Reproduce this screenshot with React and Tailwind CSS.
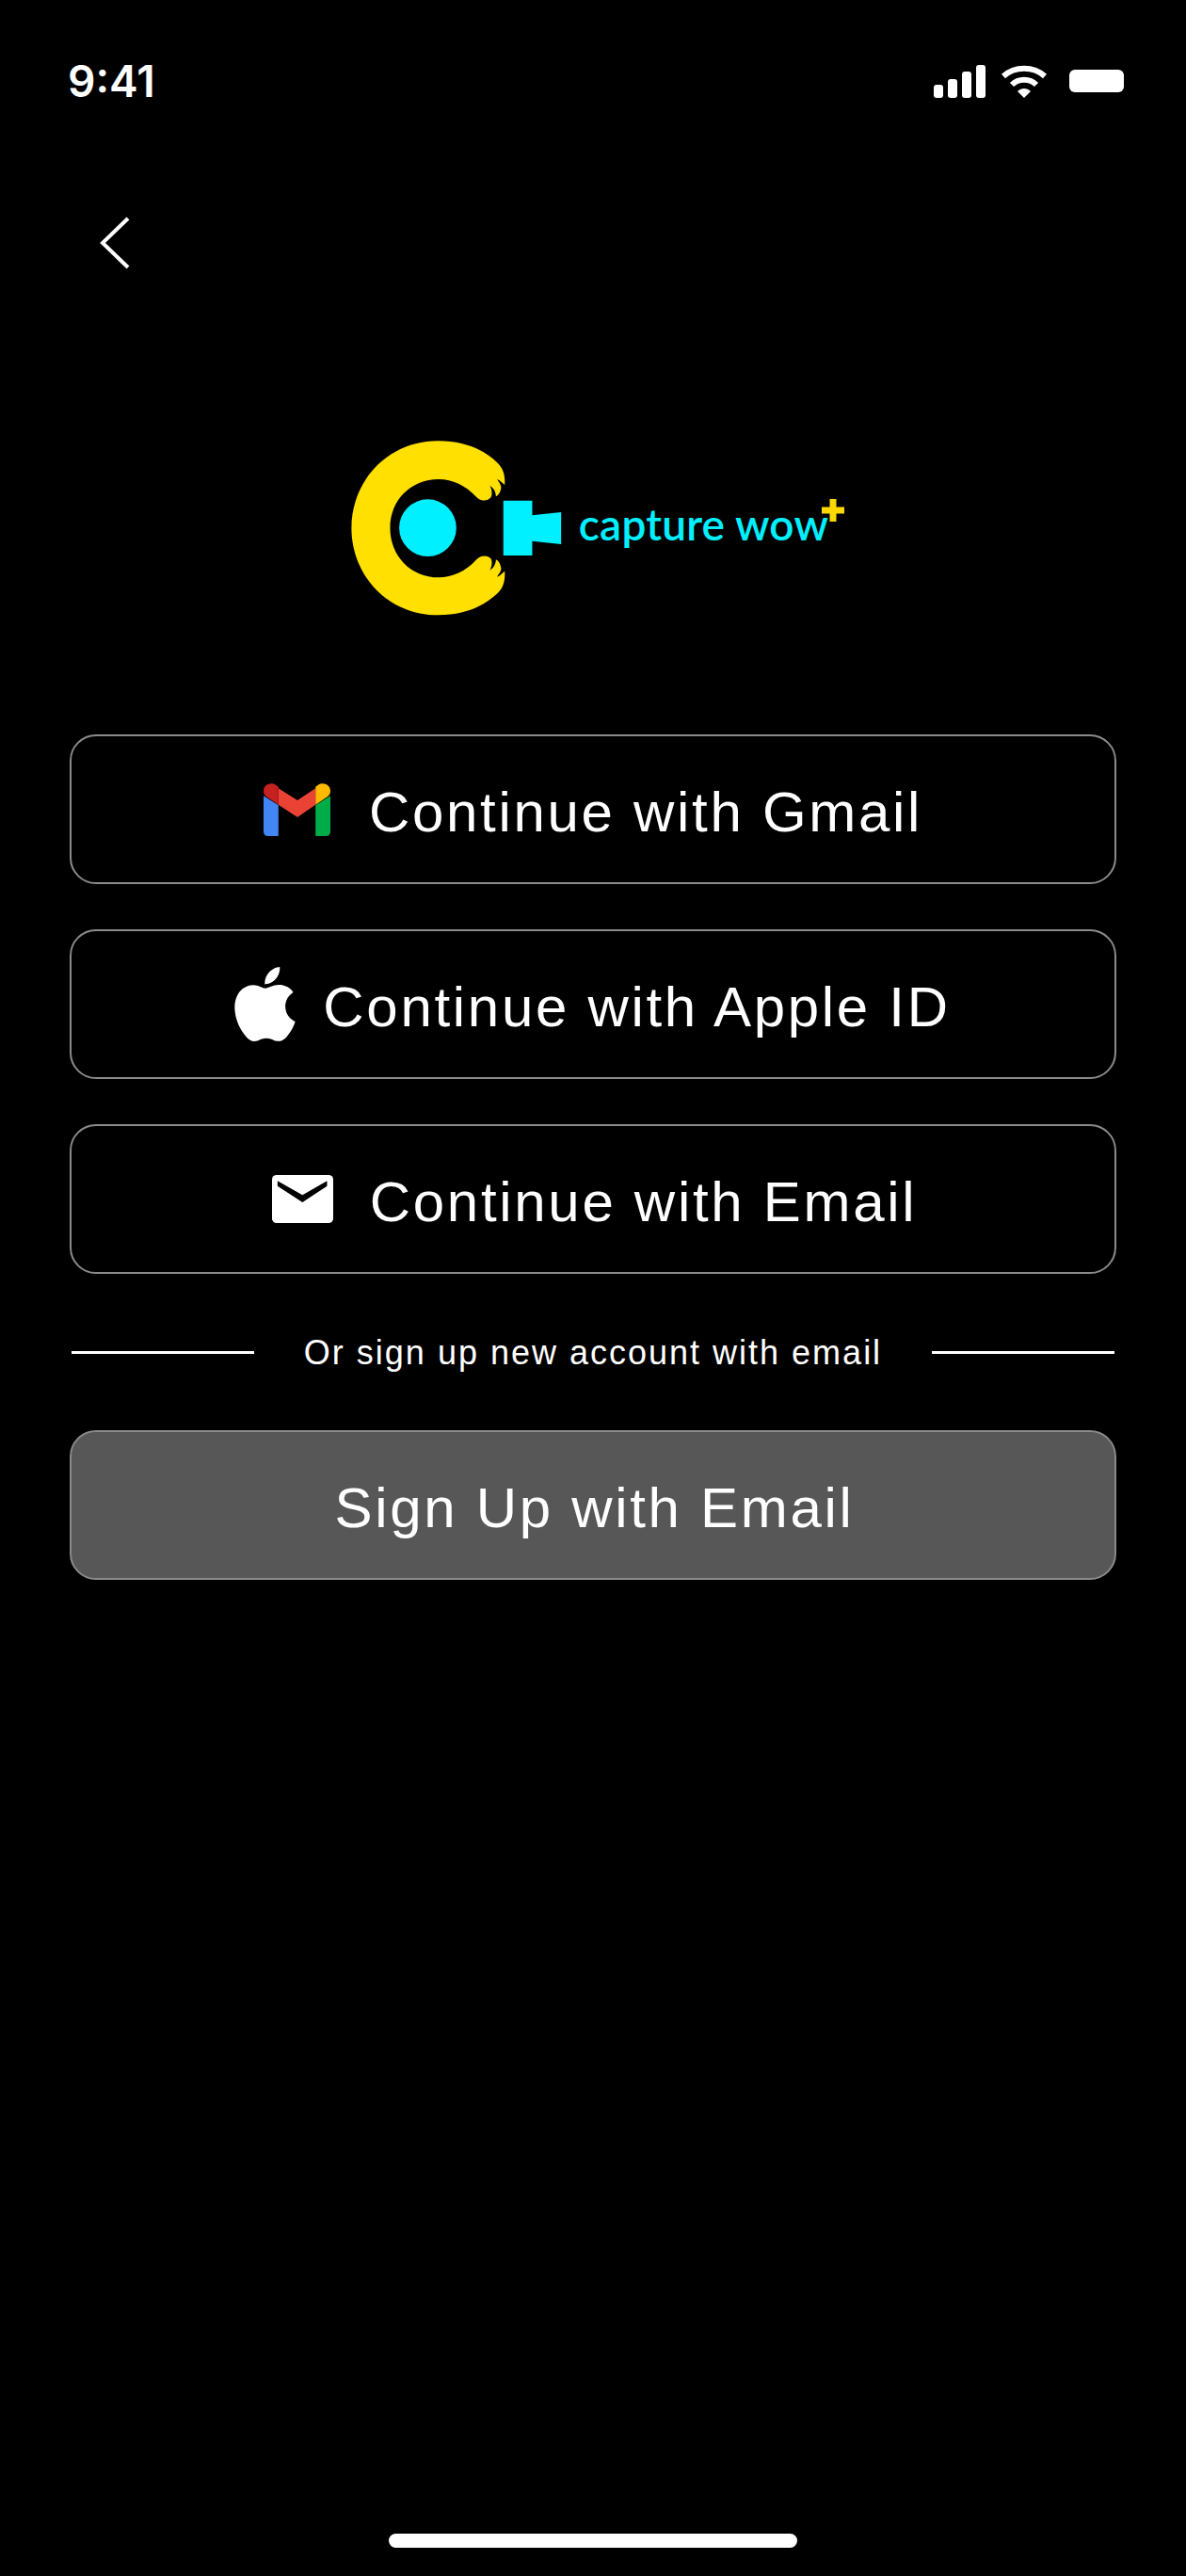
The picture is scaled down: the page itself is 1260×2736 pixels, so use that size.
import React from "react";
import { SiApple } from "react-icons/si";

const GmailIcon = () => (
  <svg width="71" height="56" viewBox="0 0 207 168" preserveAspectRatio="none" className="shrink-0">
    <path d="M0 40 L46 70 V168 H14 Q0 168 0 154 Z" fill="#4285F4" />
    <path d="M161 70 L207 40 V154 Q207 168 193 168 H161 Z" fill="#00AC47" />
    <path d="M46 16 L105 54 L161 16 V68 L105 108 L46 68 Z" fill="#EA4335" />
    <path d="M0 24 C0 4 22 -6 38 5 L46 11 V68 L8 42 C3 38 0 32 0 24 Z" fill="#C5221F" />
    <path d="M207 24 C207 4 185 -6 169 5 L161 11 V68 L199 42 C204 38 207 32 207 24 Z" fill="#FFBA00" />
  </svg>
);

const MailIcon = () => (
  <svg width="65" height="51" viewBox="0 0 189 153" preserveAspectRatio="none" className="shrink-0">
    <rect width="189" height="153" rx="14" fill="#fff" />
    <path d="M17 19 L94 64 L170 19 V35 L94 87 L17 35 Z" fill="#000" />
  </svg>
);

const LogoMark = () => (
  <svg width="257" height="220" viewBox="0 0 720 660" preserveAspectRatio="none" className="shrink-0">
    <path
      d="M318 55 C400 55 455 85 495 125 C512 143 518 165 516 195 C508 188 502 180 493 177 C500 187 507 197 505 207 C503 218 498 228 490 232 C490 220 484 205 472 198 C478 210 480 225 475 235 C465 247 445 250 430 232 C400 197 360 177 320 177 C235 177 175 245 175 332 C175 420 235 490 320 490 C360 490 400 470 430 435 C445 417 465 418 475 430 C480 440 478 455 472 467 C484 460 490 445 490 433 C498 437 503 447 505 458 C507 468 500 478 493 488 C502 485 508 477 516 470 C518 500 512 522 495 540 C455 580 400 610 318 610 C170 610 60 485 60 332 C60 180 170 55 318 55 Z"
      fill="#FFE000"
    />
    <ellipse cx="287" cy="332" rx="85" ry="91" fill="#00F0FF" />
    <path d="M512 245 H598 V292 L684 282 V384 L598 374 V420 H512 Z" fill="#00F0FF" />
  </svg>
);

const AuthButton = ({ icon, label, className }) => (
  <button className={`flex h-[159px] w-full items-center justify-center ${className} rounded-[28px] border-2 border-[#8a8a8a] bg-black text-[60px] tracking-[2.7px] text-white`}>
    {icon}
    <span className="pt-[6px]">{label}</span>
  </button>
);

export default function App() {
  return (
    <div className="flex min-h-screen w-full flex-col bg-black font-['Liberation_Sans',Arial,sans-serif] text-white">
      <div className="flex items-center justify-between pl-[72px] pr-[66px] pt-[60px]">
        <span className="font-['Inter',sans-serif] text-[46px] font-semibold leading-[52px]">9:41</span>
        <div className="flex items-end gap-[16px]">
          <svg width="55" height="35" viewBox="0 0 55 35" fill="#fff">
            <rect x="0" y="21" width="10" height="14" rx="3" />
            <rect x="15" y="15" width="10" height="20" rx="3" />
            <rect x="30" y="7" width="10" height="28" rx="3" />
            <rect x="45" y="0" width="10" height="35" rx="3" />
          </svg>
          <svg width="50" height="35" viewBox="0 0 50 35" fill="none" stroke="#fff" strokeWidth="6">
            <path d="M3 12 C15 1 35 1 47 12" />
            <path d="M12 21 C19 14 31 14 38 21" />
            <path d="M18 28 L25 35 L32 28 C28 24 22 24 18 28 Z" fill="#fff" stroke="none" />
          </svg>
          <div className="mb-[6px] ml-[7px] h-[24px] w-[58px] rounded-[6px] bg-white" />
        </div>
      </div>

      <div className="pl-[104px] pt-[118px]">
        <svg width="36" height="56" viewBox="0 0 36 56" fill="none" stroke="#fff" strokeWidth="4">
          <path d="M32 2 L5 28 L32 54" />
        </svg>
      </div>

      <div className="mt-[164px] flex items-center justify-center pr-[11px]">
        <div className="relative flex items-center">
          <LogoMark />
          <span className="mb-[6px] ml-[6px] mr-[17px] font-['Lato',sans-serif] text-[46px] font-semibold leading-none tracking-[0.2px] text-[#00F0FF]">capture wow</span>
          <svg width="24" height="24" viewBox="0 0 24 24" fill="#FFD800" className="absolute right-0 top-[80px]">
            <path d="M8.5 0 H15.5 V8.5 H24 V15.5 H15.5 V24 H8.5 V15.5 H0 V8.5 H8.5 Z" />
          </svg>
        </div>
      </div>

      <div className="mt-[110px] flex flex-col px-[74px]">
        <div className="flex flex-col gap-[48px]">
          <AuthButton icon={<GmailIcon />} label="Continue with Gmail" className="gap-[41px]" />
          <AuthButton icon={<SiApple size={79} className="shrink-0" />} label="Continue with Apple ID" className="gap-[22px] pr-[8px]" />
          <AuthButton icon={<MailIcon />} label="Continue with Email" className="gap-[39px] pl-[3px]" />
        </div>

        <div className="mt-[61px] flex items-center justify-between px-[2px]">
          <div className="h-[3px] w-[194px] bg-white" />
          <span className="pt-[2px] text-[36px] leading-[42px] tracking-[2px]">Or sign up new account with email</span>
          <div className="h-[3px] w-[194px] bg-white" />
        </div>

        <button className="mt-[61px] flex h-[159px] w-full items-center justify-center rounded-[28px] border-2 border-[#8a8a8a] bg-[#575757] pl-[3px] pt-[6px] text-[60px] tracking-[2.7px] text-white">
          Sign Up with Email
        </button>
      </div>

      <div className="mt-auto flex justify-center pb-[30px]">
        <div className="h-[15px] w-[434px] rounded-full bg-white" />
      </div>
    </div>
  );
}
